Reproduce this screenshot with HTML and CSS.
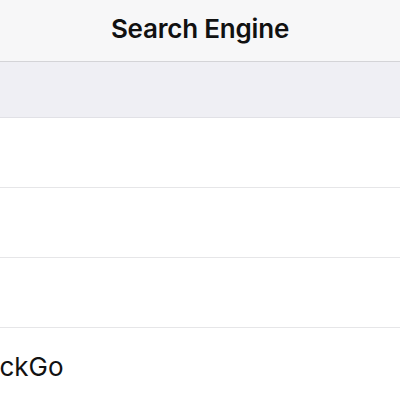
FILE: index.html
```html
<!DOCTYPE html>
<html lang="en">
<head>
<meta charset="utf-8">
<title>Search Engine</title>
<link rel="stylesheet" href="styles.css">
</head>
<body>
<div class="screen">
  <header class="nav">
    <h1 class="nav-title">Search Engine</h1>
  </header>
  <div class="section-gap"></div>
  <ul class="list">
    <li class="row"></li>
    <li class="row"></li>
    <li class="row"></li>
    <li class="row"><span class="label">DuckDuckGo</span></li>
  </ul>
</div>
</body>
</html>
```

FILE: styles.css
```css
html, body {
  margin: 0;
  padding: 0;
  background: #ffffff;
}

.screen {
  width: 400px;
  height: 400px;
  overflow: hidden;
  font-family: "Inter", "Liberation Sans", sans-serif;
  color: #000000;
}

.nav {
  height: 62px;
  box-sizing: border-box;
  background: #f7f7f8;
  border-bottom: 1px solid #d4d4d7;
  display: flex;
  align-items: center;
  justify-content: center;
}

.nav-title {
  margin: 0;
  font-size: 26px;
  font-weight: 600;
  letter-spacing: -0.2px;
  color: #111111;
  line-height: 1;
  padding-bottom: 3px;
}

.section-gap {
  height: 56px;
  box-sizing: border-box;
  background: #efeff4;
  border-bottom: 1px solid #e1e1e6;
}

.list {
  list-style: none;
  margin: 0;
  padding: 0;
}

.row {
  height: 70px;
  box-sizing: border-box;
  border-bottom: 1px solid #e6e6e8;
  display: flex;
  align-items: center;
  overflow: hidden;
  white-space: nowrap;
}

.row:last-child {
  border-bottom: none;
}

.label {
  margin-left: -98px;
  font-size: 26px;
  line-height: 1;
  color: #111111;
  padding-top: 7px;
}
```
